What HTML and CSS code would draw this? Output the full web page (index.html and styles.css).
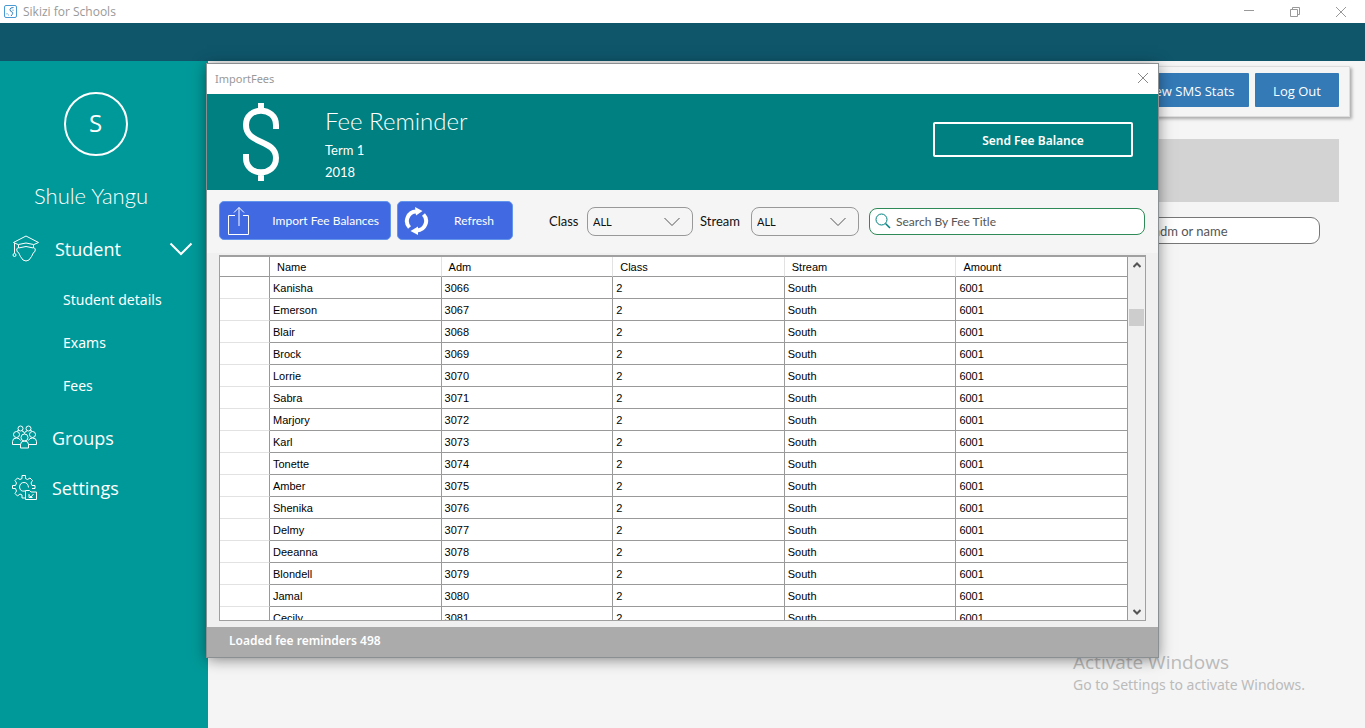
FILE: index.html
```
<!DOCTYPE html>
<html lang="en">
<head>
<meta charset="utf-8">
<title>Sikizi for Schools</title>
<link rel="stylesheet" href="styles.css">
</head>
<body>
<div class="app">
  <header class="titlebar">
    <svg class="app-icon" width="14" height="14" viewBox="0 0 14 14" fill="none" stroke="#4a9bd4"><rect x=".5" y=".5" width="12" height="12" rx="1.500"/><path d="M9.500 2.500Q6 2.500 6 4.500T8 7t-1 4" stroke="#2f7fb8"/><path d="M3 8v1.500M9 4.500v1.500M4.500 9.500v1" stroke="#6aaedb"/></svg>
    <span class="titlebar-text">Sikizi for Schools</span>
    <button class="win-button" aria-label="Minimize"><svg width="12" height="12" viewBox="0 0 12 12" stroke="#999"><path d="M1 4.500h10"/></svg></button>
    <button class="win-button" aria-label="Restore"><svg width="12" height="12" viewBox="0 0 12 12" fill="none" stroke="#999"><path d="M1.500 3.500h7v7h-7zM3.500 3.500v-2h7v7h-2"/></svg></button>
    <button class="win-button" aria-label="Close"><svg width="12" height="12" viewBox="0 0 12 12" stroke="#999"><path d="M1 1l10 10M11 1L1 11"/></svg></button>
  </header>
  <div class="topband"></div>
  <div class="body">
    <aside class="sidebar">
      <div class="profile">
        <div class="avatar">S</div>
        <div class="school">Shule Yangu</div>
      </div>
      <nav class="nav">
        <button class="nav-item nav-student">
          <svg width="28" height="28" viewBox="0 0 28 28" fill="none" stroke="#fff"><path d="M6 9.500L1.500 7.500 14 1l12.500 6.500L22 9.500M6.500 13V9.500q7.500-3 15 0V13M6.500 13q7.500-3 15 0M2.500 8v10M6 12.500q-2 1-1 4l1.500 1q1.500 4 4.500 7.500 3 2 6 0 3-3.500 4.500-7.500l1.500-1q1-3-1-4"/><circle cx="2.500" cy="20" r="1.500"/></svg>
          <span>Student</span>
          <svg class="nav-chevron" width="24" height="14" viewBox="0 0 24 14" fill="none" stroke="#fff" stroke-width="2"><path d="M1.500 1.500L12 12 22.500 1.500"/></svg>
        </button>
        <a class="nav-sub" href="#">Student details</a>
        <a class="nav-sub" href="#">Exams</a>
        <a class="nav-sub" href="#">Fees</a>
        <button class="nav-item nav-groups">
          <svg width="26" height="26" viewBox="0 0 26 26" fill="none" stroke="#fff"><circle cx="8.500" cy="3.500" r="2.500"/><circle cx="16.500" cy="3.500" r="2.500"/><circle cx="4.500" cy="9.500" r="3"/><circle cx="20.500" cy="9.500" r="3"/><circle cx="12.500" cy="12.500" r="3.500"/><path d="M5 6.500q.5-1.500 2-1.500M10 6q2 0 2.500 2.500Q13 6 15 6M18 5q1.500 0 2 1.500M8.500 19.500h-8v-3q0-3.500 4-3.500 3 0 4 2.500M16.500 19.500h8v-3q0-3.500-4-3.500-3 0-4 2.500M8.500 23v-3.500q0-3.500 4-3.500t4 3.500V23z"/></svg>
          <span>Groups</span>
        </button>
        <button class="nav-item nav-settings">
          <svg width="26" height="26" viewBox="0 0 26 26" fill="none" stroke="#fff"><path d="M13 23h-3v-3l-2-1-2.500 2L3 18.500 4.500 16l-1-2.500H.5v-3h3l1-2.500L3 5.500 5.500 3 8 4.500l2-1v-3h3.500v3l2 1L18 3l2.500 2.500L19 8l1 2.500h3v3h-3"/><path d="M13 16q-5 1-5.500-4 .5-4.500 4.500-4.500t4.500 5"/><path d="M13.500 15.500h4l1.500 1.500h5.500v7.500h-11zM17.500 20.500l1.500 1.500 2.500-3M17 19v3.500h3.500"/></svg>
          <span>Settings</span>
        </button>
      </nav>
    </aside>
    <main class="content">
      <div class="actions">
        <button class="action-button action-stats">View SMS Stats</button>
        <button class="action-button action-logout">Log Out</button>
      </div>
      <div class="banner"></div>
      <div class="student-search"><input type="text" aria-label="Search students" placeholder="Search by adm or name"></div>
    </main>
  </div>

  <div class="watermark">
    <div class="watermark-title">Activate Windows</div>
    <div class="watermark-text">Go to Settings to activate Windows.</div>
  </div>

  <section class="dialog" role="dialog" aria-label="ImportFees">
    <header class="dialog-titlebar">
      <span>ImportFees</span>
      <button class="dialog-close" aria-label="Close dialog"><svg width="12" height="12" viewBox="0 0 12 12" stroke="#888"><path d="M1 1l10 10M11 1L1 11"/></svg></button>
    </header>
    <div class="dialog-head">
      <svg class="dollar" width="38" height="80" viewBox="0 0 38 80" fill="none" stroke="#fff" stroke-width="6"><path d="M34 27V23C34 4 4 4 4 23 4 43 34 37 34 56 34 75 4 75 4 56V52M19 1v8M19 71v8"/></svg>
      <div class="head-text">
        <h1>Fee Reminder</h1>
        <div class="head-line">Term 1</div>
        <div class="head-line">2018</div>
      </div>
      <button class="send-button">Send Fee Balance</button>
    </div>
    <div class="toolbar">
      <button class="tool-button tool-import">
        <svg width="22" height="30" viewBox="0 0 22 30" fill="none" stroke="#fff"><path d="M7 9.500H.5v19h20v-19H15M11 20V1.500M6 6.500l5-5 5 5"/></svg>
        <span>Import Fee Balances</span>
      </button>
      <button class="tool-button tool-refresh">
        <svg width="26" height="28" viewBox="0 0 26 28" fill="none" stroke="#fff" stroke-width="4"><path d="M5.500 20.500A9.500 9.500 0 0 1 12 4.500M19.500 7.500A9.500 9.500 0 0 1 13 23.500"/><path d="M11 0l7.500 4-6.500 4.500zM14 19.500l-7.500 4.500 7.500 4z" fill="#fff" stroke="none"/></svg>
        <span>Refresh</span>
      </button>
      <label class="filter-label label-class" for="class">Class</label>
      <div class="select-box select-class"><select id="class"><option>ALL</option></select><svg width="16" height="10" viewBox="0 0 16 10" fill="none" stroke="#555"><path d="M.5 1L8 8.500 15.500 1"/></svg></div>
      <label class="filter-label label-stream" for="stream">Stream</label>
      <div class="select-box select-stream"><select id="stream"><option>ALL</option></select><svg width="16" height="10" viewBox="0 0 16 10" fill="none" stroke="#555"><path d="M.5 1L8 8.500 15.500 1"/></svg></div>
      <div class="fee-search">
        <svg width="16" height="16" viewBox="0 0 16 16" fill="none" stroke="#008080"><circle cx="6.500" cy="6.500" r="5.500"/><path d="M10.500 10.500l4.500 4.500" stroke-width="1.500"/></svg>
        <input type="text" aria-label="Search fees" placeholder="Search By Fee Title">
      </div>
    </div>
    <div class="grid">
      <div class="grid-scroll">
        <table>
          <colgroup><col class="col-handle"><col><col><col><col><col></colgroup>
          <thead><tr><th></th><th>Name</th><th>Adm</th><th>Class</th><th>Stream</th><th>Amount</th></tr></thead>
          <tbody>
            <tr><td></td><td>Kanisha</td><td>3066</td><td>2</td><td>South</td><td>6001</td></tr>
            <tr><td></td><td>Emerson</td><td>3067</td><td>2</td><td>South</td><td>6001</td></tr>
            <tr><td></td><td>Blair</td><td>3068</td><td>2</td><td>South</td><td>6001</td></tr>
            <tr><td></td><td>Brock</td><td>3069</td><td>2</td><td>South</td><td>6001</td></tr>
            <tr><td></td><td>Lorrie</td><td>3070</td><td>2</td><td>South</td><td>6001</td></tr>
            <tr><td></td><td>Sabra</td><td>3071</td><td>2</td><td>South</td><td>6001</td></tr>
            <tr><td></td><td>Marjory</td><td>3072</td><td>2</td><td>South</td><td>6001</td></tr>
            <tr><td></td><td>Karl</td><td>3073</td><td>2</td><td>South</td><td>6001</td></tr>
            <tr><td></td><td>Tonette</td><td>3074</td><td>2</td><td>South</td><td>6001</td></tr>
            <tr><td></td><td>Amber</td><td>3075</td><td>2</td><td>South</td><td>6001</td></tr>
            <tr><td></td><td>Shenika</td><td>3076</td><td>2</td><td>South</td><td>6001</td></tr>
            <tr><td></td><td>Delmy</td><td>3077</td><td>2</td><td>South</td><td>6001</td></tr>
            <tr><td></td><td>Deeanna</td><td>3078</td><td>2</td><td>South</td><td>6001</td></tr>
            <tr><td></td><td>Blondell</td><td>3079</td><td>2</td><td>South</td><td>6001</td></tr>
            <tr><td></td><td>Jamal</td><td>3080</td><td>2</td><td>South</td><td>6001</td></tr>
            <tr><td></td><td>Cecily</td><td>3081</td><td>2</td><td>South</td><td>6001</td></tr>
          </tbody>
        </table>
      </div>
      <div class="scrollbar">
        <svg width="8" height="6" viewBox="0 0 8 6" fill="none" stroke="#555" stroke-width="2"><path d="M.5 5L4 1.500 7.500 5"/></svg>
        <div class="thumb"></div>
        <svg width="8" height="6" viewBox="0 0 8 6" fill="none" stroke="#555" stroke-width="2"><path d="M.5 1L4 4.500 7.500 1"/></svg>
      </div>
    </div>
    <footer class="status">Loaded fee reminders 498</footer>
  </section>
</div>
</body>
</html>
```
FILE: styles.css
```
* { box-sizing: border-box; }
body { margin: 0; font-family: "Open Sans", "Noto Sans", sans-serif; }
button, input, select { font-family: inherit; margin: 0; }
button { border: 0; background: none; padding: 0; color: inherit; }
svg { display: block; flex: none; }

.app { position: relative; display: flex; flex-direction: column; height: 100vh; overflow: hidden; background: #f5f5f5; }

.titlebar { display: flex; align-items: center; height: 23px; flex: none; background: #fff; padding: 0 1px 0 4px; color: #999; line-height: 16px; }
.titlebar-text { margin-left: 5px; flex: 1; font-size: 12px; }
.win-button { width: 46px; height: 22px; display: flex; align-items: center; justify-content: center; }
.topband { height: 38px; flex: none; background: #0f566b; }

.body { display: flex; flex: 1; min-height: 0; }
.sidebar { width: 208px; flex: none; background: #009999; color: #fff; }
.profile { display: flex; flex-direction: column; align-items: center; padding: 31px 26px 0 0; }
.avatar { width: 64px; height: 64px; margin-left: 9px; border: 2px solid #fff; border-radius: 50%; display: flex; align-items: center; justify-content: center; padding-bottom: 4px; font-size: 24px; }
.school { margin-top: 26px; font-family: Lato, sans-serif; font-size: 22px; font-weight: 300; line-height: 28px; }
.nav { display: flex; flex-direction: column; margin-top: 14px; }
.nav-item { display: flex; align-items: center; gap: 14px; height: 50px; padding: 0 15px 0 12px; font-size: 18px; text-align: left; }
.nav-chevron { margin-left: auto; }
.nav-student { margin-bottom: 4px; gap: 15px; }
.nav-sub { height: 43px; line-height: 43px; padding-left: 63px; color: #fff; font-family: "Noto Sans", sans-serif; font-size: 14px; text-decoration: none; }
.nav-groups { margin-top: 6px; }

.content { flex: 1; min-width: 0; display: flex; flex-direction: column; padding: 5px 15px 0 12px; }
.actions { display: flex; justify-content: flex-end; gap: 6px; height: 51px; padding: 6px 10px; border: 1px solid #ddd; box-shadow: 2px 2px 3px #aaa; }
.action-button { height: 34px; padding: 2px 0 0; background: #337ab7; border-radius: 1px; color: #fff; font-size: 13px; }
.action-stats { width: 120px; }
.action-logout { width: 84px; }
.banner { height: 63px; margin: 22px 11px 0 0; background: #d3d3d3; }
.student-search { display: flex; justify-content: flex-end; margin: 15px 30px 0 0; }
.student-search input { width: 240px; height: 27px; padding: 0 14px; border: 1px solid #777; border-radius: 9px; background: #fff; font-family: Lato, sans-serif; font-size: 13px; }
input::placeholder { color: #555; opacity: 1; }

.watermark { position: absolute; left: 1073px; bottom: 33px; color: #bbb; white-space: nowrap; }
.watermark-title { font-size: 19px; line-height: 25px; }
.watermark-text { font-family: "Noto Sans", sans-serif; font-size: 14px; line-height: 20px; }

.dialog { position: absolute; top: 64px; bottom: 71px; left: 207px; right: 207px; display: flex; flex-direction: column; background: #f0f0f0; box-shadow: 0 0 0 1px #8a8f92, 0 2px 14px rgba(0, 0, 0, .5); }
.dialog-titlebar { display: flex; align-items: center; justify-content: space-between; height: 30px; flex: none; padding: 0 9px 2px 8px; background: #fff; color: #999; font-family: "Noto Sans", sans-serif; font-size: 11px; }
.dialog-head { display: flex; height: 96px; flex: none; padding: 8px 25px 0 35px; background: #008080; color: #fff; }
.head-text { flex: 1; margin-left: 45px; font-family: Lato, sans-serif; }
.head-text h1 { margin: 4px 0 3px; font-size: 24px; line-height: 30px; font-weight: 300; }
.head-line { font-size: 13px; line-height: 22px; }
.send-button { width: 200px; height: 35px; margin-top: 20px; padding-top: 2px; border: 2px solid #fff; border-radius: 2px; font-family: "Noto Sans", sans-serif; font-size: 12px; font-weight: 600; }

.toolbar { display: flex; align-items: center; height: 63px; flex: none; padding: 0 13px 2px 12px; background: #f5f5f5; font-family: Lato, sans-serif; }
.tool-button { display: flex; align-items: center; justify-content: space-between; height: 39px; border: 1px solid #6495ed; border-radius: 5px; background: #4169e1; color: #fff; font-size: 12px; }
.tool-import { width: 172px; padding: 0 11px 0 8px; }
.tool-refresh { width: 116px; margin-left: 6px; padding: 0 18px 0 6px; }
.filter-label { font-size: 13px; color: #111; }
.label-class { width: 38px; margin-left: 36px; }
.label-stream { width: 51px; margin-left: 7px; }
.select-box { position: relative; height: 29px; margin-top: 1px; }
.select-class { width: 106px; }
.select-stream { width: 108px; }
.select-box select { width: 100%; height: 100%; appearance: none; padding: 0 5px; border: 1px solid #999; border-radius: 8px; background: #f5f5f5; color: #111; font-size: 11px; }
.select-box svg { position: absolute; right: 13px; top: 10px; pointer-events: none; }
.fee-search { display: flex; align-items: center; gap: 5px; flex: 1; height: 27px; margin: 1px 0 0 10px; padding: 0 5px; border: 1px solid #2e8b57; border-radius: 8px; background: #fff; }
.fee-search input { flex: 1; min-width: 0; padding: 0; border: 0; background: none; font-family: Lato, sans-serif; font-size: 12px; }

.grid { display: flex; flex: 1; min-height: 0; margin: 2px 12px 6px; border: 1px solid #a0a0a0; border-top-width: 2px; background: #fff; }
.grid-scroll { flex: 1; min-width: 0; overflow: hidden; }
table { width: 100%; table-layout: fixed; border-collapse: separate; border-spacing: 0; font-family: "Liberation Sans", Arial, sans-serif; font-size: 11px; color: #000; }
.col-handle { width: 50px; }
th { height: 20px; padding: 0 7px; border-right: 1px solid #e2e2e2; border-bottom: 1px solid #999; text-align: left; font-weight: 400; }
td { height: 22px; padding: 0 3px; border-right: 1px solid #999; border-bottom: 1px solid #999; }
th:first-child, th:last-child { border-right-color: #999; }
td:first-child { border-bottom-color: #e2e2e2; }
.scrollbar { display: flex; flex-direction: column; align-items: center; width: 17px; flex: none; padding: 5px 0; background: #f0f0f0; }
.thumb { width: 15px; height: 17px; margin: 41px 0 auto; background: #cdcdcd; }

.status { height: 30px; flex: none; padding-left: 22px; background: #ababab; color: #fff; font-family: "Noto Sans", sans-serif; font-size: 12px; line-height: 27px; font-weight: 600; }
```
